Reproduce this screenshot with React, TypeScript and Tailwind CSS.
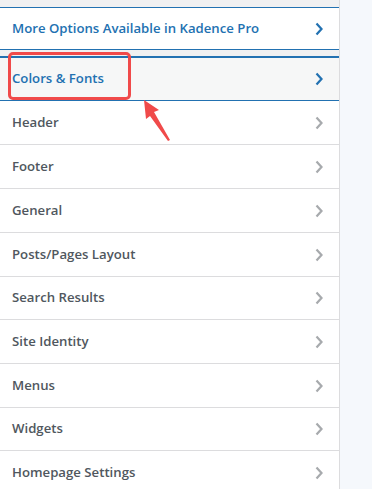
import React from "react";

const Chevron = ({ color }: { color: string }) => (
  <svg width="10" height="14" viewBox="0 0 10 14" className="shrink-0">
    <polyline points="2.5,1.5 7.5,7 2.5,12.5" fill="none" stroke={color} strokeWidth="2.2" strokeLinecap="butt" strokeLinejoin="miter" />
  </svg>
);

const items: { t: string; short?: boolean }[] = [
  { t: "Header" },
  { t: "Footer" },
  { t: "General" },
  { t: "Posts/Pages Layout" },
  { t: "Search Results", short: true },
  { t: "Site Identity" },
  { t: "Menus" },
  { t: "Widgets", short: true },
  { t: "Homepage Settings" },
];

export default function App() {
  return (
    <div
      className="relative flex h-[489px] w-[372px] overflow-hidden bg-[#f5f8fc]"
      style={{ fontFamily: '"Open Sans", "Noto Sans", sans-serif' }}
    >
      <div className="flex w-[340px] shrink-0 flex-col border-r border-[#dcdcde] bg-white">
        <div className="h-[7px] shrink-0 bg-[#f0f0f1]" />
        <div className="flex h-[43px] shrink-0 items-center justify-between border-y border-[#2271b1] bg-white pl-3 pr-[15px]">
          <span className="text-[13.2px] font-semibold text-[#2271b1]">More Options Available in Kadence Pro</span>
          <Chevron color="#2271b1" />
        </div>
        <div className="h-[6px] shrink-0 bg-[#f0f0f1]" />
        <div className="flex h-[45px] shrink-0 items-center justify-between border-t-2 border-b border-[#2271b1] bg-[#f6f7f7] pl-3 pr-[15px]">
          <span className="text-[13.2px] font-semibold text-[#2271b1]">Colors &amp; Fonts</span>
          <Chevron color="#2271b1" />
        </div>
        {items.map(({ t, short }) => (
          <div
            key={t}
            className={
              short
                ? "flex h-[43px] shrink-0 items-center justify-between border-b border-[#dcdcde] bg-white pl-3 pr-[15px]"
                : "flex h-[44px] shrink-0 items-center justify-between border-b border-[#dcdcde] bg-white pl-3 pr-[15px]"
            }
          >
            <span className="text-[13.2px] font-semibold text-[#50575e]">{t}</span>
            <Chevron color="#a7aaad" />
          </div>
        ))}
      </div>

      <div className="pointer-events-none absolute left-[8px] top-[52px] h-[48px] w-[123px] rounded-[5px] border-[3px] border-[#f04a4a]" />
      <svg className="pointer-events-none absolute left-0 top-0" width="372" height="489">
        <polygon
          points="144,100 159,110 154,112 170,140 168,141 150,116 146,119"
          fill="#f04a4a"
        />
      </svg>
    </div>
  );
}
